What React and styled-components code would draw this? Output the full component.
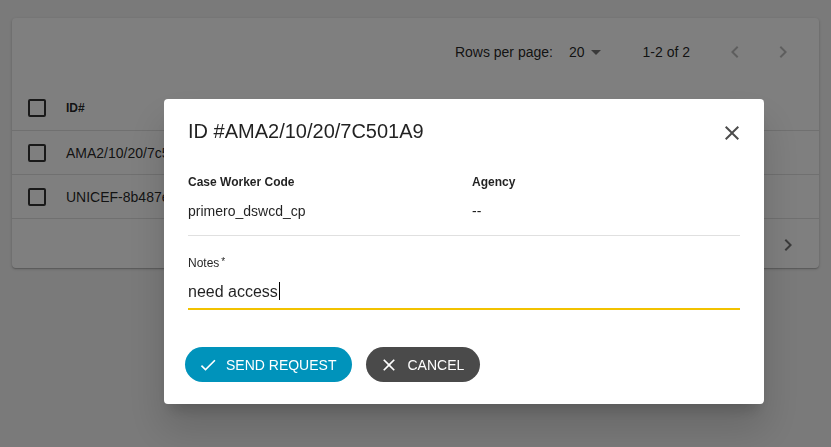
import React from 'react'
import styled, { createGlobalStyle } from 'styled-components'

const Global = createGlobalStyle`
  html, body {
    margin: 0;
    padding: 0;
    background: #f4f4f4;
    font-family: "Liberation Sans", Arial, sans-serif;
    color: rgba(0, 0, 0, 0.87);
  }
`

const Page = styled.div`
  height: 447px;
  padding: 18px 12px 0;
  box-sizing: border-box;
`

const Card = styled.div`
  background: #fff;
  border-radius: 4px;
  box-shadow: 0 1px 3px rgba(0, 0, 0, 0.2), 0 1px 1px rgba(0, 0, 0, 0.14);
  height: 250px;
  overflow: hidden;
`

const Pager = styled.div`
  display: flex;
  align-items: center;
  justify-content: flex-end;
  height: 68px;
  padding: 0 12px 0 0;
  font-size: 14px;
  color: rgba(0, 0, 0, 0.87);
`

const PagerLabel = styled.span`
  margin-right: 16px;
`

const PerPage = styled.span`
  display: flex;
  align-items: center;
  gap: 6px;
  margin-right: 42px;
`

const Caret = styled.span`
  width: 0;
  height: 0;
  border-left: 5px solid transparent;
  border-right: 5px solid transparent;
  border-top: 5px solid rgba(0, 0, 0, 0.54);
`

const Count = styled.span`
  margin-right: 21px;
`

const NavBtn = styled.span`
  display: flex;
  width: 48px;
  justify-content: center;
  color: ${p => (p.disabled ? 'rgba(0,0,0,0.26)' : 'rgba(0,0,0,0.54)')};
`

const Row = styled.div`
  display: flex;
  align-items: center;
  height: ${p => p.h}px;
  padding-left: 16px;
  border-bottom: 1px solid rgba(224, 224, 224, 1);
  font-size: ${p => (p.head ? '12px' : '14px')};
  font-weight: ${p => (p.head ? 700 : 400)};
`

const Check = styled.span`
  width: 14px;
  height: 14px;
  border: 2px solid rgba(0, 0, 0, 0.8);
  border-radius: 2px;
  margin-right: 20px;
`

const Footer = styled.div`
  display: flex;
  justify-content: flex-end;
  align-items: center;
  height: 52px;
  padding-right: 19px;
  color: rgba(0, 0, 0, 0.54);
`

const Backdrop = styled.div`
  position: fixed;
  inset: 0;
  background: rgba(0, 0, 0, 0.5);
  display: flex;
  align-items: flex-start;
  justify-content: flex-start;
  padding: 99px 0 0 164px;
`

const Dialog = styled.div`
  width: 600px;
  height: 305px;
  box-sizing: border-box;
  background: #fff;
  border-radius: 4px;
  box-shadow: 0 11px 15px -7px rgba(0, 0, 0, 0.2), 0 24px 38px 3px rgba(0, 0, 0, 0.14);
  padding: 0 24px;
  display: flex;
  flex-direction: column;
`

const TitleBar = styled.div`
  display: flex;
  align-items: center;
  justify-content: space-between;
  height: 64px;
`

const Title = styled.h2`
  margin: 0;
  font-size: 20px;
  font-weight: 400;
  color: rgba(0, 0, 0, 0.87);
`

const CloseBtn = styled.span`
  display: flex;
  margin-right: -4px;
  margin-top: 4px;
  color: rgba(0, 0, 0, 0.7);
`

const InfoGrid = styled.div`
  display: grid;
  grid-template-columns: 284px 1fr;
  row-gap: 14px;
  padding: 12px 0 16px;
  border-bottom: 1px solid #e0e0e0;
`

const InfoLabel = styled.div`
  font-size: 12px;
  font-weight: 700;
  color: rgba(0, 0, 0, 0.87);
  line-height: 14px;
`

const InfoValue = styled.div`
  font-size: 14px;
  line-height: 16px;
`

const Field = styled.div`
  padding-top: 19px;
`

const FieldLabel = styled.div`
  font-size: 12px;
  line-height: 14px;
  color: rgba(0, 0, 0, 0.87);
`

const Req = styled.span`
  font-size: 10px;
  margin-left: 2px;
  vertical-align: 2px;
`

const Input = styled.div`
  font-size: 16px;
  line-height: 20px;
  padding: 12px 0 6px;
  border-bottom: 2px solid #f2c200;
`

const Cursor = styled.span`
  display: inline-block;
  width: 1px;
  height: 18px;
  background: #000;
  vertical-align: -3px;
  margin-left: 1px;
`

const Actions = styled.div`
  display: flex;
  gap: 14px;
  margin: 37px 0 0 -3px;
`

const Button = styled.button`
  display: flex;
  align-items: center;
  gap: 8px;
  height: 35px;
  padding: 0 16px 0 13px;
  border: 0;
  border-radius: 18px;
  background: ${p => p.bg};
  color: #fff;
  font-family: inherit;
  font-size: 14px;
  letter-spacing: 0;
  text-transform: uppercase;
`

const Chevron = ({ dir }) => (
  <svg width="24" height="24" viewBox="0 0 24 24" fill="currentColor">
    {dir === 'left' ? (
      <path d="M15.41 7.41 14 6l-6 6 6 6 1.41-1.41L10.83 12z" />
    ) : (
      <path d="M10 6 8.59 7.41 13.17 12l-4.58 4.59L10 18l6-6z" />
    )}
  </svg>
)

const CloseIcon = ({ size = 24 }) => (
  <svg width={size} height={size} viewBox="0 0 24 24" fill="currentColor">
    <path d="M19 6.41 17.59 5 12 10.59 6.41 5 5 6.41 10.59 12 5 17.59 6.41 19 12 13.41 17.59 19 19 17.59 13.41 12z" />
  </svg>
)

const CheckIcon = () => (
  <svg width="20" height="20" viewBox="0 0 24 24" fill="currentColor">
    <path d="M9 16.17 4.83 12l-1.42 1.41L9 19 21 7l-1.41-1.41z" />
  </svg>
)

export default function App() {
  return (
    <>
      <Global />
      <Page>
        <Card>
          <Pager>
            <PagerLabel>Rows per page:</PagerLabel>
            <PerPage>
              20 <Caret />
            </PerPage>
            <Count>1-2 of 2</Count>
            <NavBtn disabled>
              <Chevron dir="left" />
            </NavBtn>
            <NavBtn disabled>
              <Chevron dir="right" />
            </NavBtn>
          </Pager>
          <Row head h={44}>
            <Check />
            ID#
          </Row>
          <Row h={43}>
            <Check />
            AMA2/10/20/7c501a9
          </Row>
          <Row h={43}>
            <Check />
            UNICEF-8b487ef
          </Row>
          <Footer>
            <Chevron dir="right" />
          </Footer>
        </Card>
      </Page>
      <Backdrop>
        <Dialog>
          <TitleBar>
            <Title>ID #AMA2/10/20/7C501A9</Title>
            <CloseBtn>
              <CloseIcon />
            </CloseBtn>
          </TitleBar>
          <InfoGrid>
            <InfoLabel>Case Worker Code</InfoLabel>
            <InfoLabel>Agency</InfoLabel>
            <InfoValue>primero_dswcd_cp</InfoValue>
            <InfoValue>--</InfoValue>
          </InfoGrid>
          <Field>
            <FieldLabel>
              Notes<Req>*</Req>
            </FieldLabel>
            <Input>
              need access
              <Cursor />
            </Input>
          </Field>
          <Actions>
            <Button bg="#0093bb">
              <CheckIcon />
              Send request
            </Button>
            <Button bg="#4a4a4a">
              <CloseIcon size={20} />
              Cancel
            </Button>
          </Actions>
        </Dialog>
      </Backdrop>
    </>
  )
}
